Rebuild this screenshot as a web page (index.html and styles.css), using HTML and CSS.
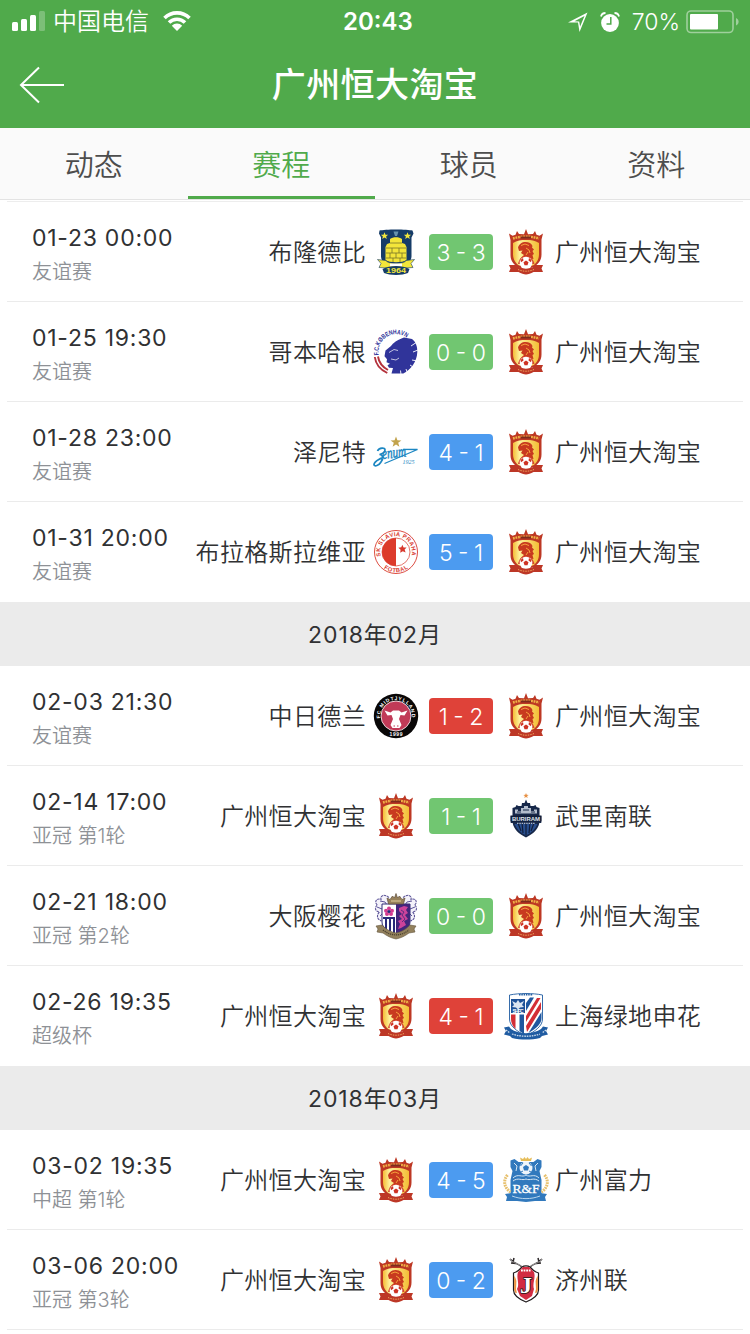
FILE: index.html
```html
<!DOCTYPE html>
<html lang="zh-CN">
<head>
    <meta charset="UTF-8">
    <meta name="viewport" content="width=device-width, initial-scale=1.0">
    <title>广州恒大淘宝 - 赛程</title>
    <link rel="stylesheet" href="styles.css">
</head>
<body>
    <!-- 球队队徽 -->
    <svg class="sprite" width="0" height="0">
        <defs>
            <linearGradient id="gold" x1="0" y1="0" x2="1" y2="0">
                <stop offset="0" stop-color="#f5bd38"/>
                <stop offset=".25" stop-color="#fdf09a"/>
                <stop offset="1" stop-color="#f4bd35"/>
            </linearGradient>
            <path id="ring-top" d="M8.800 28.200A15.800 15.800 0 1 1 39.200 28.200"/>
            <path id="ring-bottom" d="M5 30.500A20 20 0 0 0 43 30.500"/>
            <path id="ring-left" d="M6.800 27A17.500 17.500 0 0 1 37 12"/>

            <symbol id="gz" viewBox="0 0 48 48">
                <path d="M7 5.500l3.500 2.200 3-1L15 3l2 3 5 .3L24 1l2 5.300 5-.3 2-3 1.500 3.700 3 1 3.500-2.200-1.500 6v15c0 6-3.500 10-8 12.500L24 42l-7.500-2.500C12 37 8.500 33 8.500 27V12z" fill="#bd3824"/>
                <path d="M11 15c4-2.500 8-3 13-3s9 .5 13 3v11c0 6-3 9.500-6 11.500H17c-3-2-6-5.500-6-11.500z" fill="url(#gold)"/>
                <path d="M11 10.500c8-2.500 18-2.500 26 0" fill="none" stroke="#efb246" stroke-width="2.400" stroke-dasharray="1.800 .8"/>
                <path d="M19 8.500h10v2H19z" fill="#7e2b1c"/>
                <path d="M16 19.500c1-3.500 4-5.500 7.500-5.500 3.500 0 6 1.500 7 4l-.5 1.500 2 2-1.500 1.500 1.500 3-1.500 1 1 4-8-1-6 1.500c1.500-2 3-3 4.500-4.500l-3-2 1.500-2.500-3.500.5z" fill="#c83a1f"/>
                <path d="M19 17.500l4-1.500 4 1.500M24 20l3 2 1 3M26 24l-2 3" fill="none" stroke="#f6a13c" stroke-width="1"/>
                <path d="M16 36c1-5 4-8 8-8s7.500 3 8.500 8z" fill="#d4472b"/>
                <circle cx="24" cy="35" r="6.300" fill="#fff"/>
                <path d="M24 32.500l2.500 1.800-1 3h-3l-1-3zM18.500 32l2.500-2 .5 2.500-2.500 1.800zM29.500 32L27 30l-.5 2.500 2.500 1.800z" fill="#ce3425"/>
                <path d="M7 37h9l1.500 2.500c4 1.500 9 1.500 13 0L32 37h9l-1.500 3.500 1.500 3.500h-9.500C29 45.500 26 46.500 24 46.500s-5-1-7.500-2.500H7l1.500-3.500z" fill="#bd3726"/>
                <path d="M16 41.500c5 2.300 11 2.300 16 0" fill="none" stroke="#efa15b" stroke-width="1" stroke-dasharray="1.500 1"/>
            </symbol>

            <symbol id="brondby" viewBox="0 0 48 48">
                <path d="M7.500 2.500c5-1.500 28-1.500 33 0l1 3-2 4v19c0 5-5 8-15.500 9C14 36.500 9 33.500 9 28.500v-19l-2-4z" fill="#163c68"/>
                <path d="M12.500 4.200l1 2.500 2.600.1-2 1.700.7 2.600-2.300-1.500-2.300 1.500.7-2.600-2-1.700 2.600-.1zM35.500 4.200l1 2.500 2.600.1-2 1.700.7 2.600-2.300-1.500-2.300 1.500.7-2.600-2-1.700 2.600-.1z" fill="#f4e73c"/>
                <path d="M21.500 3.500h5L25 8h-2z" fill="#6793ad"/>
                <path d="M18 11c3-2.500 9-2.500 12 0v4l3 1 1.500 3v13c-4 3-17 3-21 0V19l1.500-3 3-1z" fill="#f3e53a"/>
                <path d="M18 15h12M14 20h20M14 25h20M14 30h20M20 20v5M27 20v5M24 25v5M18 25v5M30 25v5M21 30v4M28 30v4" fill="none" stroke="#77742a" stroke-width=".8"/>
                <path d="M5.500 31.500l8.500 1c2 4 18 4 20 0l8.500-1-3.500 4 2 4-8 .5H15l-8-.5 2-4z" fill="#f3e53a" stroke="#163c68" stroke-width=".6"/>
                <path d="M18 35.500h12v3H18z" fill="#fff"/>
                <path d="M10.500 41c7-4 20-4 27 0L36 45c-6 2.500-18 2.500-24 0z" fill="#163c68"/>
                <text class="crest-text" x="24" y="45" font-size="7.500" fill="#f4e73c" text-anchor="middle" textLength="20" lengthAdjust="spacingAndGlyphs">1964</text>
            </symbol>

            <symbol id="kobenhavn" viewBox="0 0 48 48">
                <path d="M13.500 22.500l5.500-4.500c2-3 6-6 13-8.500l8 1.500c4 3 5.500 8 5.300 13-.3 10-6.800 18-14 21.500H19.500L21 40l-4-.2-1.500-2.500 2.500-1.500-3.500-1.500.5-3-2.500-3z" fill="#30349a"/>
                <path d="M34 41l1.500 4M38 37l4.500 3M40 32l5.500 1M41 24l5-2M39 18l6-4M28.500 42.500l.5 4" stroke="#fff" stroke-width=".9"/>
                <path d="M17 24.500l5-3 4 1M19 31l5 1 3-2" fill="none" stroke="#fff" stroke-width=".7"/>
                <text class="crest-text" font-size="6.600" fill="#30349a"><textPath href="#ring-left" textLength="42" lengthAdjust="spacingAndGlyphs">F.C.KØBENHAVN</textPath></text>
                <path d="M2.800 29c.8 6.500 5 12.500 12.500 16M6 28.500c.8 5.500 4.500 10.500 10 13.500" fill="none" stroke="#b4323c" stroke-width="1.900"/>
            </symbol>

            <symbol id="zenit" viewBox="0 0 48 48">
                <path d="M24 8.500l1.400 3.800 4 .1-3.200 2.400 1.200 3.900-3.400-2.300-3.400 2.300 1.200-3.900-3.200-2.400 4-.1z" fill="#c2a34c"/>
                <text class="crest-script" x="10.500" y="31" font-size="16" fill="#1b86c2" stroke="#1b86c2" stroke-width=".5" transform="rotate(-6 10 31)" textLength="24" lengthAdjust="spacingAndGlyphs">enum</text>
                <path d="M5.500 23c1.500-3.500 8-4 7.500-.8-.3 2.400-3.500 4-5.500 4.300 4 .3 4 4 1.500 7.500-2 3.500-6.500 5-7 2.800-.5-2.500 5-6.300 10-7.500" fill="none" stroke="#1b86c2" stroke-width="1.700"/>
                <path d="M31 21.300L45.500 21.500 12.500 35.500" fill="none" stroke="#1b86c2" stroke-width="1.300"/>
                <text class="crest-script" x="30.500" y="36" font-size="6" fill="#1b86c2" textLength="12">1925</text>
            </symbol>

            <symbol id="slavia" viewBox="0 0 48 48">
                <circle cx="24" cy="24" r="21.500" fill="#fff" stroke="#d8392d" stroke-width=".9"/>
                <circle cx="24" cy="24" r="14" fill="#fff" stroke="#d8392d" stroke-width=".7"/>
                <path d="M24 10a14 14 0 0 0 0 28z" fill="#dc3b2c"/>
                <path d="M30.300 16.800l1.300 2.700 3-.1-2 2.200 1 2.900-2.800-1.300-2.600 1.600.4-3.100-2.300-2 3-.5z" fill="#d8392d"/>
                <text class="crest-text" font-size="5.800" fill="#d8392d"><textPath href="#ring-top" textLength="57">SK SLAVIA PRAHA</textPath></text>
                <text class="crest-text" font-size="5.800" fill="#d8392d"><textPath href="#ring-bottom" startOffset="12" textLength="26">FOTBAL</textPath></text>
            </symbol>

            <symbol id="midtjylland" viewBox="0 0 48 48">
                <circle cx="24" cy="24" r="22.200" fill="#090707"/>
                <circle cx="24" cy="24" r="15" fill="#c13a57" stroke="#fff" stroke-width=".8"/>
                <path d="M12.500 18.500l6 2 2.500-2h6l2.500 2 6-2-3 5-4-.5-1.500 4 2.500 6-2 3h-7l-2-3 2.500-6-1.500-4-4 .5z" fill="#fff"/>
                <path d="M21.500 34h1.500M25 34h1.500" stroke="#c13a57"/>
                <text class="crest-text" font-size="5" fill="#fff"><textPath href="#ring-top" startOffset="2" textLength="53">FC MIDTJYLLAND</textPath></text>
                <text class="crest-text" x="24" y="44" font-size="5" fill="#fff" text-anchor="middle" textLength="13">1999</text>
            </symbol>

            <symbol id="buriram" viewBox="0 0 48 48">
                <path d="M24 1l.7 1.800 2 .1-1.600 1.200.6 1.900-1.700-1.100L22.300 6l.6-1.900-1.600-1.200 2-.1z" fill="#e79043"/>
                <path d="M10.500 16l3-1 1-2 2 1h3l.5-3h2.500L24 7.500l1.500 3.500H28l.5 3h3l2-1 1 2 3 1v8h1.800v7h-2c-1 6-6 11-13.300 14.500C16.700 42 11.700 37 10.700 31h-2v-7h1.800z" fill="#172849"/>
                <path d="M13 21.500v-4h3v1.500h3v-3h3v-2h4v2h3v3h3v-1.500h3v4z" fill="#b3bdcd"/>
                <path d="M15 20h4M21 18h6M29 20h4" stroke="#172849"/>
                <path d="M12.500 32h23c-2 5-6 9-11.500 11.500C18.500 41 14.500 37 12.500 32z" fill="#284e8e"/>
                <path d="M24 31v12M20 31l1 10M16 31l3 8M28 31l-1 10M32 31l-3 8" stroke="#101d38" stroke-width="1.200"/>
                <path d="M8.500 23.500h31v6h-31z" fill="#111d38"/>
                <text class="crest-text" x="24" y="28.800" font-size="6" fill="#dfe5ef" text-anchor="middle" textLength="28">BURIRAM</text>
                <path d="M15 31.300h18" stroke="#aab8d0" stroke-width="1.300" stroke-dasharray="1.500 .8"/>
            </symbol>

            <symbol id="cerezo" viewBox="0 0 48 48">
                <path d="M17 5.500c-5-4-9-2-8 2-5-2-7 3-3.500 5.500-4 3-1.500 7 2 7-4 4-1.500 8 2 9M31 5.500c5-4 9-2 8 2 5-2 7 3 3.500 5.500 4 3 1.500 7-2 7 4 4 1.500 8-2 9" fill="#f4f2fa" stroke="#5c5498" stroke-width="1.100" stroke-dasharray="2.500 .7"/>
                <path d="M8 9l5 1 2 3M40 9l-5 1-2 3M5 15l5 2M43 15l-5 2M8 24l3-3M40 24l-3-3" fill="none" stroke="#5c5498"/>
                <path d="M10 12h28v18c0 6-6 9-14 13.500C16 39 10 36 10 30z" fill="#fff" stroke="#302d76" stroke-width="1"/>
                <path d="M24 12h14v18c0 6-6 9-14 13z" fill="#41267c"/>
                <path d="M27 16l5-2 4 1-2 3 2 3-3 2 3 4-4 2 2 4-5 3-3 1 2-5-2-3 4-2-3-3 3-2-3-3z" fill="#cb439a"/>
                <path d="M29 18l3 2-2 3 3 4-3 3" fill="none" stroke="#41267c" stroke-width=".8"/>
                <path d="M11 25h12v2H11zM13 27h2v10h-2zM17 27h2v12h-2zM21 27h2v14h-2z" fill="#282a78"/>
                <g fill="#d33c91"><circle cx="17" cy="16.500" r="2"/><circle cx="20" cy="18.800" r="2"/><circle cx="19" cy="22" r="2"/><circle cx="15" cy="22" r="2"/><circle cx="14" cy="18.800" r="2"/></g>
                <circle cx="17" cy="19.500" r="1.600" fill="#282a78"/>
                <path d="M16.500 12l-1.500-6 3 1.500 2.500-3.500 2 2L24 1.500 25.500 6l2-2L30 7.500 33 6l-1.500 6z" fill="#97815a" stroke="#5d4e3c" stroke-width=".7"/>
                <path d="M19 9h10" stroke="#e1cf9a"/>
                <path d="M4 34l6-1c5 5 9 7 14 8 5-1 9-3 14-8l6 1-2 3 1 3-6 1c-4 3-8 5-13 6-5-1-9-3-13-6l-6-1 1-3z" fill="#93815d" stroke="#62543c" stroke-width=".6"/>
                <path d="M11 38c8 6.500 18 6.500 26 0" fill="none" stroke="#4a402e" stroke-width="1.200" stroke-dasharray="1.200 .8"/>
            </symbol>

            <symbol id="shenhua" viewBox="0 0 48 48">
                <path d="M7.500 3c10-2 23-2 33 0v24c0 7-7 12-16.500 17C14.500 39 7.500 34 7.500 27z" fill="#fff" stroke="#205ca2" stroke-width=".9"/>
                <path d="M17 2.800h14" stroke="#205ca2" stroke-width="1.500" stroke-dasharray="1.500 .8"/>
                <path d="M9 7h14v14H9z" fill="#1d5198"/>
                <path d="M10 9l4 2 2-3 2 3 4-2-2 4 2 2-4 .5-2 2-2-2-4-.5 2-2z" fill="#dbe5f1"/>
                <text class="crest-text" x="16" y="20.800" font-size="5" fill="#fff" text-anchor="middle" textLength="11">SHFC</text>
                <path d="M9 22.500h4.500V37C10 33.500 9 30 9 27zM24 34L39 10v7L25 40z" fill="#d32e36"/>
                <path d="M24 24L35 6h3.500L24 30z" fill="#d32e36"/>
                <path d="M17.500 22.500H22V42l-4.500-3zM39.500 20v6c0 6-5 10-13 15z" fill="#1f579f"/>
                <path d="M24 19l8-13.500h-4L24 11z" fill="#1f579f"/>
                <path d="M2 35.500l5-1 2 2.500c7 5.500 23 5.500 30 0l2-2.500 5 1-2 3.500 2 3.500-6 1.500-2 2c-9 2-19 2-28 0l-2-2-6-1.500 2-3.500z" fill="#205ca2"/>
                <path d="M10 42c9 3 19 3 28 0M4 38l4 3M44 38l-4 3" fill="none" stroke="#cfdeed" stroke-width="1.300" stroke-dasharray="1.600 .9"/>
            </symbol>

            <symbol id="rf" viewBox="0 0 48 48">
                <path d="M19 5l-1-3.500 3 1.500 1.500-2L24 3l1.500-2L27 3l3-1.500L29 5z" fill="#e6bd59"/>
                <path d="M8.500 4.500l4-1.500 4 3h15l4-3 4 1.500v6.500l-2 4 2 9v15l-15.500 5-15.500-5V24l2-9-2-4z" fill="#3179bd"/>
                <circle cx="24" cy="12" r="6.500" fill="#eef5fb"/>
                <path d="M24 9l3 2-1 3.500h-4L21 11z" fill="#3179bd"/>
                <path d="M18.500 10l2.500-3M29.500 10L27 7M19 16l2-1M29 16l-2-1" stroke="#3179bd"/>
                <path d="M12 7l3 3-1 5M36 7l-3 3 1 5" fill="none" stroke="#d5e6f4" stroke-width="1"/>
                <path d="M11 22c5-5 9 0 13-3 4 3 8-2 13 3M11 25c5-4 9 0 13-2 4 2 8-2 13 2" fill="none" stroke="#d5e6f4" stroke-width="1"/>
                <path d="M5.500 19c-5 6-3 13 3 17M42.500 19c5 6 3 13-3 17" fill="none" stroke="#e7c06d" stroke-width="3" stroke-dasharray="1.800 .8"/>
                <path d="M3 38l7-1c8 4 20 4 28 0l7 1-2 3 1 4H33l-9 1-9-1H4l1-4z" fill="#3179bd"/>
                <path d="M10 40c9 3.500 19 3.500 28 0" fill="none" stroke="#b6d4ec"/>
                <text class="crest-serif" x="24" y="36.500" font-size="13" fill="#fff" stroke="#fff" stroke-width=".3" text-anchor="middle" textLength="27" lengthAdjust="spacingAndGlyphs">R&amp;F</text>
            </symbol>

            <symbol id="jeju" viewBox="0 0 48 48">
                <path d="M20 11C16 7 12 8 8 3M14 7.500L9 7M11 6l1-4M28 11c4-4 8-3 12-8M34 7.500l5-.5M37 6l-1-4" fill="none" stroke="#292426" stroke-width="1.500"/>
                <path d="M20 11C16 7 12 8 8 3M28 11c4-4 8-3 12-8" fill="none" stroke="#fff" stroke-width=".5"/>
                <path d="M11.500 17c4-1 6-3 8.500-6 2-1.500 6-1.500 8 0 2.500 3 4.500 5 8.500 6v17c0 5-5 9-12.500 12-7.500-3-12.500-7-12.500-12z" fill="#fff" stroke="#201a1c" stroke-width="1.200"/>
                <path d="M16 16l5-5h6l5 5c2 6-2 12 0 17l-2 7-6 4-6-4-3-7c3-5-1-11 1-17z" fill="#d22c42"/>
                <path d="M12.800 22c3 5-1.500 9 1.500 15l-1.500-3zM35.200 22c-3 5 1.500 9-1.500 15l1.500-3z" fill="#ec923f" stroke="#ec923f" stroke-width="1.300"/>
                <path d="M19 14.500h10" stroke="#fff" stroke-width="2" stroke-dasharray="1.800 .8"/>
                <text class="crest-serif outlined" x="24" y="37" font-size="24" font-weight="bold" fill="#fff" stroke="#251719" stroke-width="1.600" text-anchor="middle">J</text>
            </symbol>
        </defs>
    </svg>

    <header class="header">
        <div class="status-bar">
            <div class="status-left">
                <svg class="signal" width="34" height="20" viewBox="0 0 34 20" fill="#fff">
                    <rect x="0" y="11" width="6" height="9" rx="1.500"/>
                    <rect x="9" y="8" width="6" height="12" rx="1.500"/>
                    <rect x="18" y="4" width="6" height="16" rx="1.500"/>
                    <rect x="27" y="0" width="6" height="20" rx="1.500" opacity=".25"/>
                </svg>
                <span class="carrier">中国电信</span>
                <svg class="wifi" width="28" height="20" viewBox="0 0 28 20">
                    <path d="M1.500 7a17.700 17.700 0 0 1 25 0M6 11.500a11.300 11.300 0 0 1 16 0" fill="none" stroke="#fff" stroke-width="3.600"/>
                    <path d="M8.800 14.700a7.400 7.400 0 0 1 10.400 0L14 20z" fill="#fff"/>
                </svg>
            </div>
            <div class="status-time">20:43</div>
            <div class="status-right">
                <svg class="location" width="20" height="20" viewBox="0 0 20 20">
                    <path d="M0 10.500L19.500.5 11.500 20l-1.500-9.500zM11.200 9.600l.9 5L16.500 4 6.500 9.300z" fill="#fff" fill-rule="evenodd"/>
                </svg>
                <svg class="alarm" width="20" height="20" viewBox="0 0 20 20">
                    <circle cx="10" cy="11" r="8.900" fill="#fff"/>
                    <path d="M1 4.500C1.500 2 3.500 1 5.500 1M19 4.500C18.500 2 16.500 1 14.500 1" fill="none" stroke="#fff" stroke-width="1.800"/>
                    <path d="M10.800 5v7H6.500" fill="none" stroke="#50aa4b" stroke-width="1.500"/>
                </svg>
                <span class="percent">70%</span>
                <svg class="battery" width="54" height="24" viewBox="0 0 54 24">
                    <rect x="1" y="1" width="46" height="21.500" rx="4" fill="none" stroke="#fff" stroke-width="1.600" opacity=".45"/>
                    <rect x="4" y="4" width="28" height="15.500" rx="1" fill="#fff"/>
                    <path d="M50 8c3.500 1.500 3.500 6 0 7.500z" fill="#fff" opacity=".45"/>
                </svg>
            </div>
        </div>
        <div class="nav-bar">
            <svg class="back" width="46" height="38" viewBox="0 0 46 38">
                <path d="M45 19H2M20 1.500L2 19l18 17.500" fill="none" stroke="#fff" stroke-width="2"/>
            </svg>
            <h1 class="title">广州恒大淘宝</h1>
        </div>
    </header>

    <nav class="tabs">
        <a class="tab">动态</a>
        <a class="tab active">赛程</a>
        <a class="tab">球员</a>
        <a class="tab">资料</a>
    </nav>

    <main class="schedule">
        <section class="month first">
            <div class="match">
                <div class="info"><div class="date">01-23 00:00</div><div class="league">友谊赛</div></div>
                <div class="team home">布隆德比</div>
                <svg class="logo"><use href="#brondby"/></svg>
                <div class="score draw">3 - 3</div>
                <svg class="logo"><use href="#gz"/></svg>
                <div class="team away">广州恒大淘宝</div>
            </div>
            <div class="match">
                <div class="info"><div class="date">01-25 19:30</div><div class="league">友谊赛</div></div>
                <div class="team home">哥本哈根</div>
                <svg class="logo"><use href="#kobenhavn"/></svg>
                <div class="score draw">0 - 0</div>
                <svg class="logo"><use href="#gz"/></svg>
                <div class="team away">广州恒大淘宝</div>
            </div>
            <div class="match">
                <div class="info"><div class="date">01-28 23:00</div><div class="league">友谊赛</div></div>
                <div class="team home">泽尼特</div>
                <svg class="logo"><use href="#zenit"/></svg>
                <div class="score lose">4 - 1</div>
                <svg class="logo"><use href="#gz"/></svg>
                <div class="team away">广州恒大淘宝</div>
            </div>
            <div class="match">
                <div class="info"><div class="date">01-31 20:00</div><div class="league">友谊赛</div></div>
                <div class="team home">布拉格斯拉维亚</div>
                <svg class="logo"><use href="#slavia"/></svg>
                <div class="score lose">5 - 1</div>
                <svg class="logo"><use href="#gz"/></svg>
                <div class="team away">广州恒大淘宝</div>
            </div>
        </section>

        <section class="month">
            <h2 class="month-title">2018年02月</h2>
            <div class="match">
                <div class="info"><div class="date">02-03 21:30</div><div class="league">友谊赛</div></div>
                <div class="team home">中日德兰</div>
                <svg class="logo"><use href="#midtjylland"/></svg>
                <div class="score win">1 - 2</div>
                <svg class="logo"><use href="#gz"/></svg>
                <div class="team away">广州恒大淘宝</div>
            </div>
            <div class="match">
                <div class="info"><div class="date">02-14 17:00</div><div class="league">亚冠 第1轮</div></div>
                <div class="team home">广州恒大淘宝</div>
                <svg class="logo"><use href="#gz"/></svg>
                <div class="score draw">1 - 1</div>
                <svg class="logo"><use href="#buriram"/></svg>
                <div class="team away">武里南联</div>
            </div>
            <div class="match">
                <div class="info"><div class="date">02-21 18:00</div><div class="league">亚冠 第2轮</div></div>
                <div class="team home">大阪樱花</div>
                <svg class="logo"><use href="#cerezo"/></svg>
                <div class="score draw">0 - 0</div>
                <svg class="logo"><use href="#gz"/></svg>
                <div class="team away">广州恒大淘宝</div>
            </div>
            <div class="match">
                <div class="info"><div class="date">02-26 19:35</div><div class="league">超级杯</div></div>
                <div class="team home">广州恒大淘宝</div>
                <svg class="logo"><use href="#gz"/></svg>
                <div class="score win">4 - 1</div>
                <svg class="logo"><use href="#shenhua"/></svg>
                <div class="team away">上海绿地申花</div>
            </div>
        </section>

        <section class="month">
            <h2 class="month-title">2018年03月</h2>
            <div class="match">
                <div class="info"><div class="date">03-02 19:35</div><div class="league">中超 第1轮</div></div>
                <div class="team home">广州恒大淘宝</div>
                <svg class="logo"><use href="#gz"/></svg>
                <div class="score lose">4 - 5</div>
                <svg class="logo"><use href="#rf"/></svg>
                <div class="team away">广州富力</div>
            </div>
            <div class="match continued">
                <div class="info"><div class="date">03-06 20:00</div><div class="league">亚冠 第3轮</div></div>
                <div class="team home">广州恒大淘宝</div>
                <svg class="logo"><use href="#gz"/></svg>
                <div class="score lose">0 - 2</div>
                <svg class="logo"><use href="#jeju"/></svg>
                <div class="team away">济州联</div>
            </div>
        </section>
    </main>
</body>
</html>
```
FILE: styles.css
```css
* {
    box-sizing: border-box;
}

body {
    margin: 0;
    height: 1334px;
    overflow: hidden;
    background: #fff;
    color: #303133;
    font-family: Inter, "Noto Sans CJK SC", sans-serif;
    font-weight: 350;
}

svg {
    display: block;
    flex-shrink: 0;
}

.sprite {
    position: absolute;
}

/* 顶部 */
.header {
    height: 128px;
    background: #50aa4b;
    color: #fff;
}

.status-bar {
    height: 40px;
    padding: 0 10px 0 12px;
    display: grid;
    grid-template-columns: 1fr 70px 1fr;
    align-items: center;
}

.status-left,
.status-right {
    display: flex;
    align-items: center;
    height: 40px;
}

.status-right {
    justify-content: flex-end;
    padding-top: 1px;
}

.carrier {
    margin-left: 7px;
    padding-top: 1px;
    font-size: 24px;
    line-height: 40px;
}

.wifi {
    margin-left: 14px;
}

.status-time {
    padding: 2px 0 0 2px;
    font-size: 24px;
    line-height: 40px;
    font-weight: 600;
    text-align: center;
    white-space: nowrap;
}

.alarm {
    margin-left: 12px;
}

.percent {
    margin: 0 6px 0 12px;
    font-size: 23px;
    font-weight: 300;
}

.nav-bar {
    height: 88px;
    padding: 2px 19px 0;
    display: grid;
    grid-template-columns: 46px 1fr 46px;
    align-items: center;
}

.title {
    margin: 0;
    font-size: 34px;
    line-height: 86px;
    font-weight: 500;
    text-align: center;
    letter-spacing: .4px;
}

/* 标签栏 */
.tabs {
    display: flex;
    height: 72px;
    background: #fafafa;
    border-bottom: 1px solid #e3e3e3;
}

.tab {
    flex: 1;
    height: 71px;
    line-height: 75px;
    border-bottom: 3px solid transparent;
    color: #4d4d4d;
    font-size: 29px;
    text-align: center;
}

.tab.active {
    color: #50aa4b;
    border-bottom-color: #50aa4b;
}

/* 赛程列表 */
.month.first {
    padding-top: 1px;
}

.month.first::before {
    content: "";
    display: block;
    height: 1px;
    margin: 0 7px;
    background: #ededed;
}

.month-title {
    margin: 0;
    height: 64px;
    line-height: 67px;
    background: #ebebeb;
    font-size: 23px;
    font-weight: 400;
    text-align: center;
    letter-spacing: .9px;
}

.match {
    display: grid;
    grid-template-columns: 140px 194px 48px 64px 48px 1fr;
    align-items: center;
    height: 100px;
    margin: 0 7px;
    padding-left: 25px;
    border-bottom: 1px solid #ebebeb;
    white-space: nowrap;
}

.match:last-child:not(.continued) {
    border-bottom-color: transparent;
}

.info {
    padding-top: 7px;
}

.date {
    font-size: 23px;
    line-height: 34px;
    font-weight: 400;
    letter-spacing: .75px;
}

.league {
    color: #8e9196;
    font-size: 20px;
    line-height: 35px;
}

.team {
    padding-top: 3px;
    font-size: 24px;
    line-height: 36px;
    letter-spacing: .35px;
}

.team.home {
    text-align: right;
}

.team.away {
    padding-left: 29px;
}

.match .logo {
    width: 48px;
    height: 48px;
    margin-left: 6px;
}

.score {
    width: 64px;
    height: 36px;
    margin-left: 15px;
    border-radius: 4px;
    color: #fff;
    font-size: 23px;
    line-height: 38px;
    font-weight: 300;
    text-align: center;
    word-spacing: -1px;
}

.score + .logo {
    margin-left: 24px;
}

.score.draw {
    background: #71c671;
}

.score.lose {
    background: #4c9bf0;
}

.score.win {
    background: #df4239;
}

/* 队徽文字 */
.crest-text {
    font-family: "Liberation Sans", sans-serif;
    font-weight: bold;
}

.crest-script {
    font-family: "Liberation Serif", serif;
    font-style: italic;
}

.crest-serif {
    font-family: "Liberation Serif", serif;
}

.outlined {
    paint-order: stroke;
}
```
